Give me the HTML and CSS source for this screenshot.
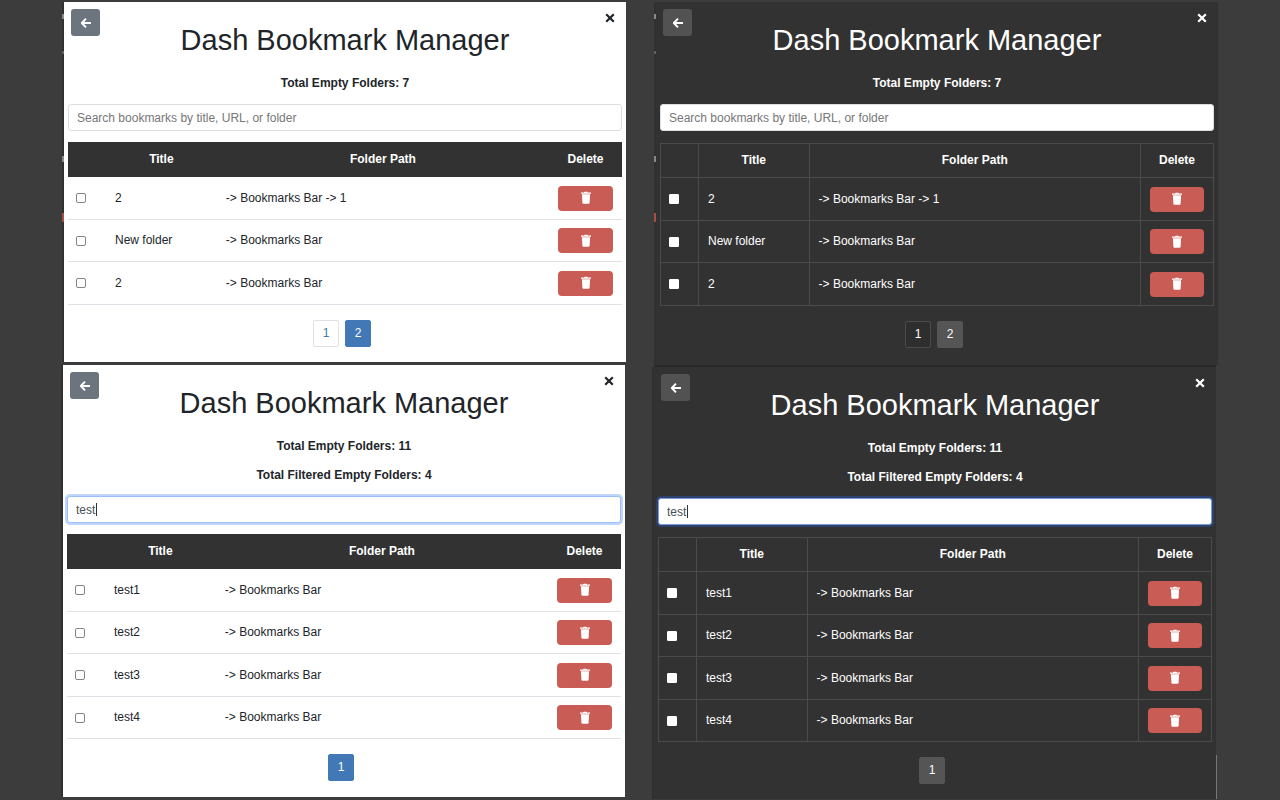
FILE: index.html
```
<!DOCTYPE html>
<html lang="en">
<head>
<meta charset="utf-8">
<meta name="viewport" content="width=device-width, initial-scale=1">
<title>Dash Bookmark Manager</title>
<link rel="stylesheet" href="styles.css">
</head>
<body>
<svg class="sprite" aria-hidden="true">
  <symbol id="arrow" viewBox="0 0 12 12"><path d="M6 1.600 1.800 6 6 10.400M2.200 6H11" fill="none" stroke="currentColor" stroke-width="1.900" stroke-linejoin="round"/></symbol>
  <symbol id="cross" viewBox="0 0 10 10"><path d="M1.200 1.200 8.800 8.800M8.800 1.200 1.200 8.800" fill="none" stroke="currentColor" stroke-width="2.200"/></symbol>
  <symbol id="trash" viewBox="0 0 12 14"><path d="M1 1.500h3L4.700.8h2.600L8 1.500h3v1.300H1zM1.900 3.200h8.200l-.5 8.600q-.1 1-1 1H3.400q-.9 0-1-1z" fill="currentColor"/></symbol>
</svg>
<main id="app"></main>
<script src="app.js"></script>
</body>
</html>
```

FILE: app.js
```
const rowsTop = [["2", "-> Bookmarks Bar -> 1"], ["New folder", "-> Bookmarks Bar"], ["2", "-> Bookmarks Bar"]];
const rowsFiltered = ["test1", "test2", "test3", "test4"].map(t => [t, "-> Bookmarks Bar"]);

const icon = (id) => `<svg class="icon icon-${id}" aria-hidden="true"><use href="#${id}"/></svg>`;

function panel(theme, key, view) {
  const rows = view.rows.map(([title, path]) => `
    <tr>
      <td class="cell-check"><input class="check" type="checkbox" aria-label="Select ${title}"></td>
      <td>${title}</td>
      <td>${path.replace(/>/g, "&gt;")}</td>
      <td><button class="delete" type="button" aria-label="Delete ${title}">${icon("trash")}</button></td>
    </tr>`).join("");
  const pages = view.pages.map((p) =>
    `<button class="page${p === view.current ? " current" : ""}" type="button">${p}</button>`).join("");
  return `
  <section class="panel ${theme}">
    <header class="head">
      <button class="back" type="button" aria-label="Back">${icon("arrow")}</button>
      <h1>Dash Bookmark Manager</h1>
      <button class="close" type="button" aria-label="Close">${icon("cross")}</button>
    </header>
    <div class="totals">${view.totals.map((t) => `<p>${t}</p>`).join("")}</div>
    <div class="search${view.query ? " focused" : ""}">
      <input id="${key}" type="text" aria-label="Search bookmarks" value="${view.query}" placeholder="Search bookmarks by title, URL, or folder">
      ${view.query ? '<span class="caret"></span>' : ""}
    </div>
    <table>
      <colgroup><col class="col-check"><col class="col-title"><col><col class="col-delete"></colgroup>
      <thead><tr><th></th><th>Title</th><th>Folder Path</th><th>Delete</th></tr></thead>
      <tbody>${rows}</tbody>
    </table>
    <nav class="pages" aria-label="Pages">${pages}</nav>
  </section>`;
}

const all = { rows: rowsTop, pages: [1, 2], current: 2, query: "", totals: ["Total Empty Folders: 7"] };
const filtered = { rows: rowsFiltered, pages: [1], current: 1, query: "test", totals: ["Total Empty Folders: 11", "Total Filtered Empty Folders: 4"] };

document.getElementById("app").innerHTML =
  `<div class="pair pair-all">${panel("light", "q1", all)}${panel("dark", "q2", all)}</div>
   <div class="pair pair-filtered">${panel("light", "q3", filtered)}${panel("dark", "q4", filtered)}</div>`;
```

FILE: styles.css
```
* { box-sizing: border-box; }
body {
  margin: 0;
  background: #3c3c3c;
  font: 12px/17px "Liberation Sans", Arial, sans-serif;
}
button, input { font: inherit; margin: 0; }
button { padding: 0; border: 0; cursor: pointer; }
h1, p { margin: 0; }
.sprite { position: absolute; width: 0; height: 0; }
.icon { display: block; }
.icon-arrow { width: 12px; height: 12px; }
.icon-cross { width: 10px; height: 10px; }
.icon-trash { width: 12px; height: 14px; }

.pair { display: grid; grid-template-columns: 1fr 1fr; align-items: start; }
.pair-all { padding: 2px 62px 0 64px; gap: 30px; }
.pair-filtered { padding: 0 64px 0 63px; gap: 29px; }

.panel { position: relative; padding: 7px 4px 15px; }
.panel::before {
  content: "";
  position: absolute;
  top: 0;
  bottom: 0;
  left: -2px;
  width: 2px;
  background: #303030;
}
.pair-all .panel::before {
  background: linear-gradient(#303030 12px, #888 12px, #888 17px, #303030 17px, #303030 49px, #606060 49px, #606060 52px, #303030 52px, #303030 154px, #888 154px, #888 160px, #303030 160px, #303030 211px, #a5523d 211px, #a5523d 220px, #303030 220px);
}
.light { background: #fff; color: #212529; }
.pair-filtered .light { padding-bottom: 16px; }
.dark { background: #323232; color: #fff; }
.pair-all .dark { padding-bottom: 17px; }
.pair-filtered .dark { border-top: 2px solid #292929; }
.pair-filtered .dark::after {
  content: "";
  position: absolute;
  right: -1px;
  bottom: 0;
  width: 1px;
  height: 44px;
  background: #777;
}

.head {
  display: grid;
  grid-template-columns: 29px 1fr 29px;
  align-items: start;
  padding: 0 3px;
}
h1 { margin-top: 14px; font-size: 29px; line-height: 34px; font-weight: 400; text-align: center; }
.back {
  display: grid;
  place-items: center;
  height: 27px;
  border-radius: 3px;
  color: #fff;
  background: #6c757d;
}
.dark .back { background: #525252; }
.close {
  display: grid;
  place-items: center;
  justify-self: end;
  width: 19px;
  height: 18px;
  color: inherit;
  background: none;
}
.totals {
  display: grid;
  gap: 12px;
  margin: 18px 0 12px;
  font-weight: 700;
  text-align: center;
}

.search { position: relative; }
.search input {
  display: block;
  width: 100%;
  height: 27px;
  padding: 0 8px;
  border: 1px solid #dcdfe2;
  border-radius: 3px;
  outline: 0;
  color: #495057;
  background: #fff;
}
.search input::placeholder { color: #777; opacity: 1; }
.focused input { border-color: #9cc0f5; box-shadow: 0 0 0 2px #bfd5fb; }
.dark .focused input { border-color: #7c9cd8; box-shadow: 0 0 0 2px #2e4270; }
.caret { position: absolute; left: 29px; top: 7px; width: 1px; height: 13px; background: #333; }

table {
  width: 100%;
  margin-top: 11px;
  table-layout: fixed;
  border-collapse: separate;
  border-spacing: 0;
}
.col-check { width: 38px; }
.col-title { width: 20%; }
.col-delete { width: 73px; }
th { height: 35px; padding: 0 8px; color: #fff; background: #323232; }
td { height: 43px; padding: 0 9px; border-bottom: 1px solid #dee2e6; }
.cell-check { padding: 0 8px; }
tr:nth-child(even) td { height: 42px; }
.dark table { margin-top: 12px; border-collapse: collapse; }
.dark th, .dark td { border: 1px solid #4b4b4b; }
.dark th { height: 34px; }
.check {
  appearance: none;
  display: block;
  width: 10px;
  height: 10px;
  border: 1px solid #858585;
  border-radius: 2px;
  background: #fff;
}
.dark .check { border-color: #fff; border-radius: 1px; }
.delete {
  display: grid;
  place-items: center;
  width: 100%;
  height: 25px;
  border-radius: 4px;
  color: #fff;
  background: #c95c54;
}

.pages { display: flex; justify-content: center; margin-top: 15px; }
.page {
  width: 26px;
  height: 27px;
  margin-right: 6px;
  border: 1px solid #dee2e6;
  border-radius: 2px;
  color: #4278b5;
  background: #fff;
}
.page.current { border-color: #4278b5; color: #fff; background: #4278b5; }
.dark .page { border-color: #4b4b4b; color: #fff; background: #2e2e2e; }
.dark .page.current { border-color: #555; background: #555; }
```
